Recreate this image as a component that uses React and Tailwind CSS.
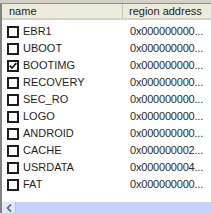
import React from 'react';

const rows = [
  { name: 'EBR1', addr: '0x000000000...' },
  { name: 'UBOOT', addr: '0x000000000...' },
  { name: 'BOOTIMG', addr: '0x000000000...', checked: true },
  { name: 'RECOVERY', addr: '0x000000000...' },
  { name: 'SEC_RO', addr: '0x000000000...' },
  { name: 'LOGO', addr: '0x000000000...' },
  { name: 'ANDROID', addr: '0x000000000...' },
  { name: 'CACHE', addr: '0x000000002...' },
  { name: 'USRDATA', addr: '0x000000004...' },
  { name: 'FAT', addr: '0x000000000...' },
];

function Box({ checked }) {
  return (
    <div className="w-[12px] h-[12px] border-2 border-[#1c1c1c] bg-white flex items-center justify-center shrink-0">
      {checked && (
        <svg width="8" height="8" viewBox="0 0 8 8">
          <path d="M0.8 3.6 L3 6 L7.3 1.2" stroke="#1c1c1c" strokeWidth="1.8" fill="none" />
        </svg>
      )}
    </div>
  );
}

export default function App() {
  return (
    <div className="w-[211px] h-[213px] bg-white overflow-hidden flex flex-col text-[11px] text-[#1e1e1e]" style={{ fontFamily: '"Liberation Sans", Arial, sans-serif' }}>
      <div className="h-[4px] bg-[#d4d0c8] border-b border-[#8c8c8c] shrink-0" />
      <div className="flex flex-1 min-h-0">
        <div className="w-[2px] bg-[#828282] shrink-0" />
        <div className="flex-1 flex flex-col min-w-0">
          <div className="h-[16px] flex bg-[#ebeadb] border-b-2 border-[#d6d2c2] shrink-0">
            <div className="w-[121px] pl-[7px] flex items-center border-r border-[#c7c5b2]">name</div>
            <div className="flex-1 pl-[6px] flex items-center">region address</div>
          </div>
          <div className="flex-1 flex flex-col pt-[3px]">
            {rows.map((r) => (
              <div key={r.name} className="h-[17px] flex items-center">
                <div className="w-[122px] flex items-center pl-[5px] gap-[4px]">
                  <Box checked={r.checked} />
                  <span>{r.name}</span>
                </div>
                <div className="pl-[6px] tracking-[-0.2px] text-[#2a2a2a]">{r.addr}</div>
              </div>
            ))}
          </div>
          <div className="h-[11px] flex bg-[#c8d7f8] shrink-0">
            <div className="w-[14px] flex items-start justify-center pt-[2px] bg-[#dfe8fb] border-r border-[#b0c4ef]">
              <svg width="6" height="8" viewBox="0 0 6 8">
                <path d="M5 0.5 L1.5 4 L5 7.5" stroke="#4d6185" strokeWidth="1.6" fill="none" />
              </svg>
            </div>
            <div className="flex-1 bg-[#c3d3fd]" />
          </div>
        </div>
      </div>
    </div>
  );
}
